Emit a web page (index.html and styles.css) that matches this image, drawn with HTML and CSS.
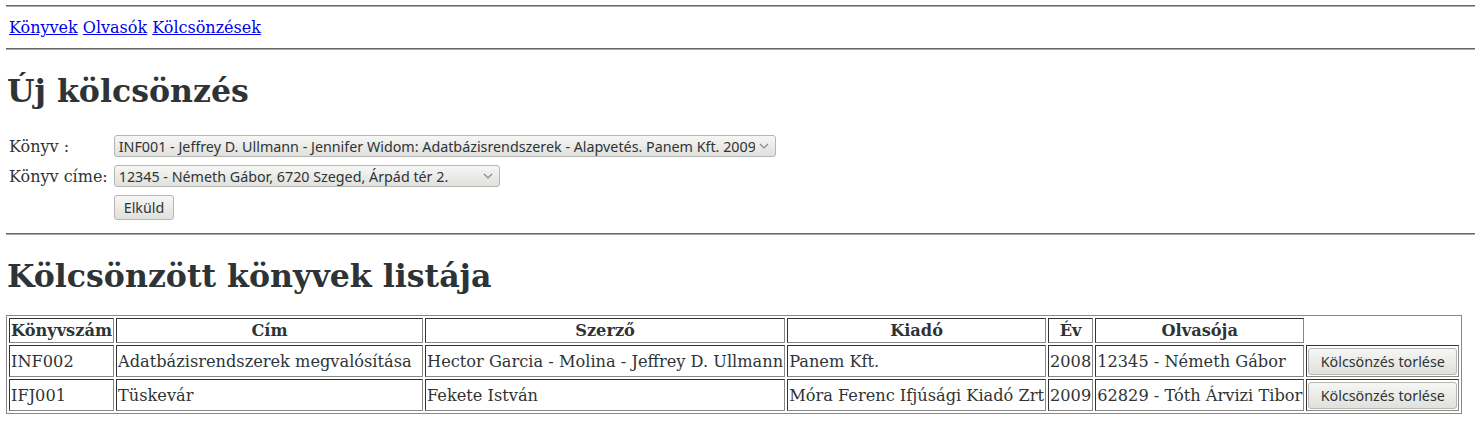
FILE: index.html
```html
<!DOCTYPE html>
<html lang="hu">
<head>
    <meta charset="UTF-8">
    <title>Kölcsönzések</title>
    <link rel="stylesheet" href="styles.css">
</head>
<body>
    <hr>
    <div class="menu">
        <a href="#">Könyvek</a>
        <a href="#">Olvasók</a>
        <a href="#">Kölcsönzések</a>
    </div>
    <hr>
    <h1>Új kölcsönzés</h1>
    <form class="loan-form">
        <table class="form-table">
            <tr>
                <td>Könyv :</td>
                <td>
                    <select class="wide">
                        <option>INF001 - Jeffrey D. Ullmann - Jennifer Widom: Adatbázisrendszerek - Alapvetés. Panem Kft. 2009</option>
                    </select>
                </td>
            </tr>
            <tr>
                <td>Könyv címe:</td>
                <td>
                    <select class="narrow">
                        <option>12345 - Németh Gábor, 6720 Szeged, Árpád tér 2.</option>
                    </select>
                </td>
            </tr>
            <tr class="submit-row">
                <td></td>
                <td><button type="button" class="btn">Elküld</button></td>
            </tr>
        </table>
    </form>
    <hr>
    <h1>Kölcsönzött könyvek listája</h1>
    <table class="list">
        <tr>
            <th>Könyvszám</th>
            <th class="col-title">Cím</th>
            <th>Szerző</th>
            <th>Kiadó</th>
            <th>Év</th>
            <th>Olvasója</th>
            <th class="empty"></th>
        </tr>
        <tr>
            <td>INF002</td>
            <td>Adatbázisrendszerek megvalósítása</td>
            <td>Hector Garcia - Molina - Jeffrey D. Ullmann</td>
            <td>Panem Kft.</td>
            <td>2008</td>
            <td>12345 - Németh Gábor</td>
            <td><button type="button" class="btn">Kölcsönzés torlése</button></td>
        </tr>
        <tr>
            <td>IFJ001</td>
            <td>Tüskevár</td>
            <td>Fekete István</td>
            <td>Móra Ferenc Ifjúsági Kiadó Zrt</td>
            <td>2009</td>
            <td>62829 - Tóth Árvizi Tibor</td>
            <td><button type="button" class="btn">Kölcsönzés torlése</button></td>
        </tr>
    </table>
</body>
</html>
```

FILE: styles.css
```css
body {
    margin: 0 0 0 6px;
    font-family: "DejaVu Serif", serif;
    font-size: 16px;
    color: #2e3436;
    background: #fff;
}
hr {
    margin: 5px 0 0 0;
    height: 0;
    border: none;
    border-top: 1px solid #666;
    border-bottom: 1px solid #aaa;
}
.menu {
    padding: 11px 3px 6px 3px;
    font-size: 16px;
}
.menu a {
    color: #0000ee;
}
h1 {
    font-size: 31.6px;
    font-weight: bold;
    margin: 22px 0 21px 1px;
    line-height: 37px;
    color: #2e3436;
}
.loan-form {
    margin: 0 0 10px 0;
}
.form-table {
    border-spacing: 2px;
}
.form-table td {
    padding: 1px;
    font-size: 16px;
    height: 26px;
}
.form-table td:first-child {
    padding-right: 3px;
}
.form-table .submit-row td {
    padding-top: 2px;
}
select, .btn {
    font-family: "Noto Sans", "DejaVu Sans", sans-serif;
    font-size: 14.3px;
    color: #2e3436;
    border: 1px solid #b6b6b3;
    border-radius: 3px;
    background: linear-gradient(#f6f6f4, #e0e0dd);
}
select {
    appearance: none;
    height: 22px;
    padding: 0 20px 0 4px;
    background: url("data:image/svg+xml;utf8,<svg xmlns='http://www.w3.org/2000/svg' width='10' height='6'><path d='M1 1l4 4 4-4' fill='none' stroke='%23888' stroke-width='1.2'/></svg>") no-repeat right 6px center, linear-gradient(#f6f6f4, #e0e0dd);
}
select.wide {
    width: 662px;
}
select.narrow {
    width: 386px;
}
.btn {
    padding: 0 9px;
    height: 25px;
}
.list {
    border: 1px solid #888;
    border-spacing: 2px;
    margin-top: 4px;
}
.list th, .list td {
    border: 1px solid #333;
    border-right-color: #888;
    border-bottom-color: #888;
    padding: 0 1px;
    font-size: 16.2px;
    white-space: nowrap;
}
.list th {
    height: 23px;
    font-weight: bold;
    text-align: center;
}
.list th.col-title {
    width: 303px;
}
.list td {
    height: 30px;
}
.list th.empty {
    border: none;
}
.list .btn {
    width: 149px;
    height: 27px;
}
```
